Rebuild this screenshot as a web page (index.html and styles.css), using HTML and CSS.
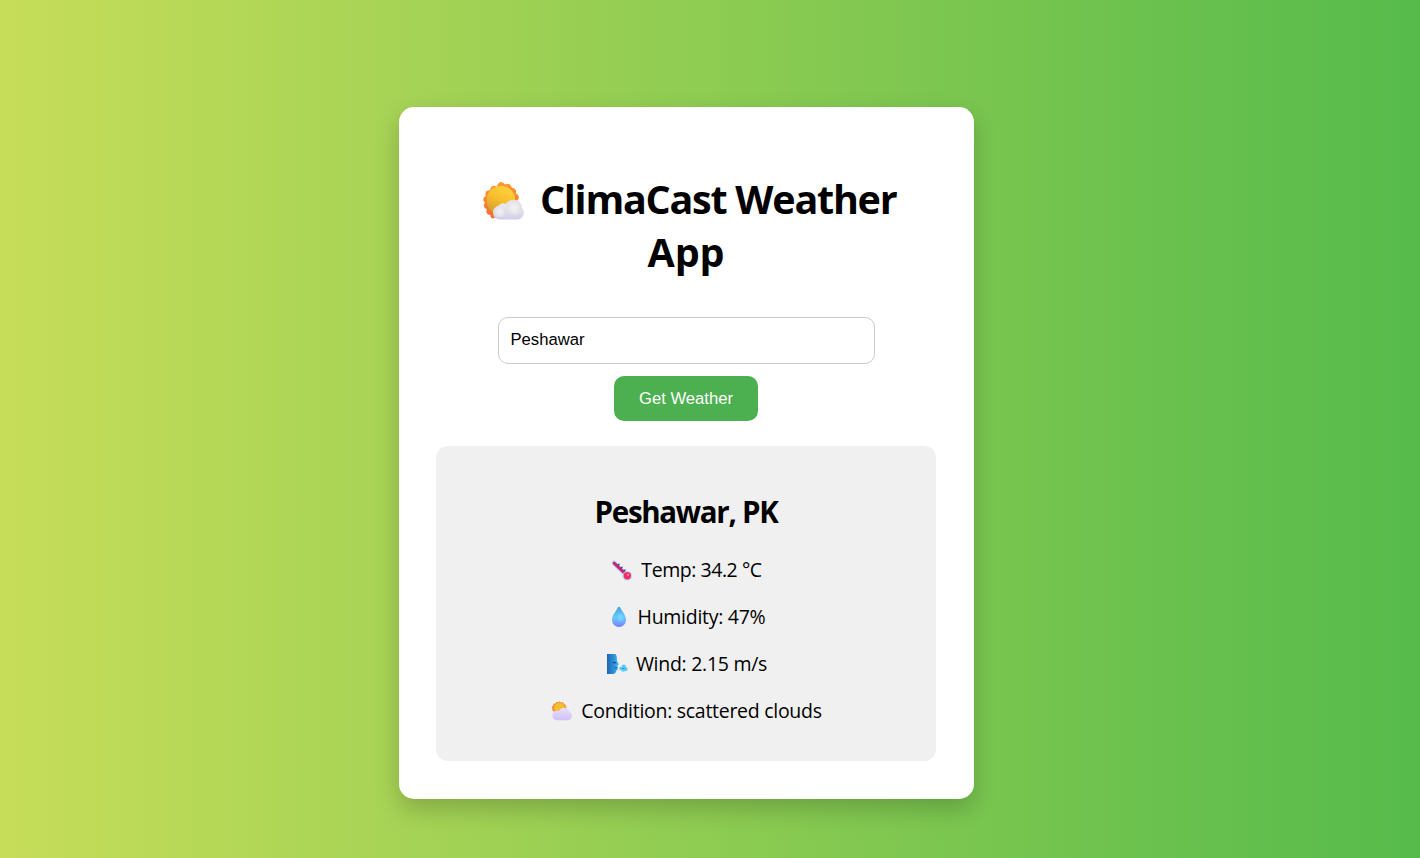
FILE: index.html
```
<!DOCTYPE html>
<html lang="en">
<head>
<meta charset="utf-8">
<title>ClimaCast Weather App</title>
<link rel="stylesheet" href="styles.css">
</head>
<body>
<svg class="defs" width="0" height="0" aria-hidden="true">
  <defs>
    <linearGradient id="sun" x1="0.7" y1="0" x2="0.2" y2="1"><stop offset="0" stop-color="#ffd23c"/><stop offset="0.5" stop-color="#f7bd2d"/><stop offset="1" stop-color="#cf9a2b"/></linearGradient>
    <linearGradient id="rays" x1="0.5" y1="0" x2="0.5" y2="1"><stop offset="0" stop-color="#ff9a2e"/><stop offset="1" stop-color="#f26d35"/></linearGradient>
    <linearGradient id="cloud" x1="0" y1="0" x2="0" y2="1"><stop offset="0" stop-color="#efeff1"/><stop offset="0.55" stop-color="#e3e1e8"/><stop offset="1" stop-color="#d3cbee"/></linearGradient>
    <radialGradient id="puff"><stop offset="0" stop-color="#f3f3f4"/><stop offset="0.6" stop-color="#e9e8ec"/><stop offset="1" stop-color="#e0dee6"/></radialGradient>
    <linearGradient id="lilac" x1="0" y1="0" x2="0" y2="1"><stop offset="0" stop-color="#e6e0f8"/><stop offset="1" stop-color="#cfc1fa"/></linearGradient>
    <linearGradient id="drop" x1="0.5" y1="0" x2="0.5" y2="1"><stop offset="0" stop-color="#4ba3d8"/><stop offset="0.5" stop-color="#66c8fb"/><stop offset="0.75" stop-color="#71a9ff"/><stop offset="1" stop-color="#7a7cf5"/></linearGradient>
    <linearGradient id="face" x1="0" y1="0" x2="1" y2="0"><stop offset="0" stop-color="#1f67ae"/><stop offset="0.5" stop-color="#2b8bd3"/><stop offset="1" stop-color="#43b9f2"/></linearGradient>
  </defs>
</svg>
<main class="card">
  <h1 class="title">
    <svg class="title-icon" viewBox="0 0 41 38" aria-hidden="true">
      <path fill="url(#rays)" d="M18 0q2.500 0 4 2.500 3-1.500 5 .2 1.500 1 1.700 3.100 2.600-.2 3.800 1.700 1 1.600.3 4 2.700 1 3 3.200.3 2-1.500 4 1.700 2.200.7 4.300L34 26 10 36.500q-2.200 0-2.800-3.500-3.200-.4-3.700-2.500-.4-1.700.3-3.300Q.9 26 .8 23.700q-.1-1.600 1.200-3Q0 19 .3 17q.4-2 2.500-3Q2 11 3.300 9.500 4.600 8 7 8.300 7.200 5 9.400 4q1.700-.8 4.300.7Q15.200 0 18 0Z"/>
      <circle cx="18" cy="18.200" r="14.300" fill="url(#sun)"/>
      <path fill="url(#cloud)" d="M17 37.500a7 7 0 0 1-1.200-13.900 6 6 0 0 1 7-1.600A8.900 8.900 0 0 1 39 26q2 1.700 2 4.700a7 7 0 0 1-7 6.800Z"/>
      <circle cx="31" cy="25.500" r="7.800" fill="url(#puff)"/>
      <circle cx="17" cy="29.500" r="5.600" fill="url(#puff)"/>
    </svg>
    <span class="title-text">ClimaCast Weather</span><br>App
  </h1>
  <form class="search">
    <input class="city-input" type="text" value="Peshawar" placeholder="Enter city name" aria-label="City">
    <button class="submit" type="button">Get Weather</button>
  </form>
  <section class="result">
    <h2 class="place">Peshawar, PK</h2>
    <p class="reading temp">
      <svg class="icon" viewBox="0 0 24 24" aria-hidden="true">
        <g fill="none" stroke-linecap="round"><path d="M4 5l12 11.500" stroke="#b9d9f8" stroke-width="5"/><path d="M4.200 5.200l12 11.500" stroke="#c92475" stroke-width="3"/><path d="M9 6.300L8.200 7.200M12 9.200l-.8.900M15 12l-.8.900" stroke="#46477c" stroke-width="1.400"/></g>
        <circle cx="17.300" cy="17.800" r="4.800" fill="#b9d9f8"/><circle cx="17.300" cy="17.800" r="3.700" fill="#ef2e63"/><circle cx="18" cy="16.800" r="1.200" fill="#ff7890"/>
      </svg>
      <span>Temp: 34.2 °C</span>
    </p>
    <p class="reading">
      <svg class="icon" viewBox="0 0 24 24" aria-hidden="true"><path fill="url(#drop)" d="M12 1.800q.9 0 1.500 1.200C15.500 7 19 10.300 19 15a7 7 0 0 1-14 0C5 10.300 8.500 7 10.500 3q.6-1.200 1.500-1.200Z"/><ellipse cx="13.500" cy="12.500" rx="2.800" ry="4" fill="#79dcff" opacity=".55"/></svg>
      <span>Humidity: 47%</span>
    </p>
    <p class="reading">
      <svg class="icon" viewBox="0 0 24 24" aria-hidden="true">
        <path fill="url(#face)" d="M2 2h8.500q1.500 1.500 1.300 4l.2 3 1.800 3.200-1.300 1.300.5 2.500q0 1.700-1.500 2.200-.3 3.300-3.500 3.800H2Z"/>
        <path d="M8 10.200q1.500 1 3 .2" fill="none" stroke="#174a7c" stroke-width="1.200"/><path d="M9 15.800h3" stroke="#1f6ca8"/>
        <g fill="#5fcaf5"><circle cx="16" cy="16.500" r="1.800"/><circle cx="18.800" cy="14.800" r="2.200"/><circle cx="20.400" cy="17" r="2.200"/><circle cx="18.200" cy="17.700" r="2.100"/></g>
        <path d="M17 16.500h2.500" stroke="#278fc8"/>
      </svg>
      <span>Wind: 2.15 m/s</span>
    </p>
    <p class="reading">
      <svg class="icon" viewBox="0 0 24 24" aria-hidden="true">
        <path fill="#f28b38" d="M9.500 2.300l1.600 1.200 2-.3.800 1.800 1.900.7-.1 2 1.300 1.500L14 15 5 14.500l-.8-1.900-1.900-.8.2-2-1-1.800L3.200 6.700l.3-2 2-.3 1-1.600 1.700.5Z"/>
        <circle cx="9.500" cy="9" r="5.400" fill="#f6bd2c"/>
        <path fill="url(#lilac)" d="M7 21.200a4.800 4.800 0 0 1-.7-9.500q1.600-.4 2.700.3a5.600 5.600 0 0 1 10.300.5 4.600 4.600 0 0 1-1.300 8.700Z"/>
      </svg>
      <span>Condition: scattered clouds</span>
    </p>
  </section>
</main>
</body>
</html>
```
FILE: styles.css
```
* {
  box-sizing: border-box;
}

html {
  height: 100%;
  background: linear-gradient(to right, #c6dd59, #56bb4b);
}

body {
  display: flex;
  flex-direction: column;
  margin: 0;
  padding: 107px 446px 59px 399px;
  font-family: "Segoe UI", "Open Sans", "Noto Sans", sans-serif;
  color: #000;
}

.defs {
  position: absolute;
}

.card {
  width: 575px;
  height: 692px;
  padding: 38px 38px 38px 37px;
  border-radius: 15px;
  background: #fff;
  box-shadow: 0 10px 25px rgba(0, 0, 0, 0.2);
  text-align: center;
}

.title {
  margin: 28px 0 27px;
  font-size: 39.5px;
  line-height: 53px;
  white-space: nowrap;
}

.title-icon {
  width: 41px;
  height: 38px;
  margin: 0 6px 0 7px;
  vertical-align: -6px;
}

.title-text {
  letter-spacing: -1.25px;
}

.search {
  display: flex;
  flex-direction: column;
  align-items: center;
  gap: 12px;
  margin: 38px 0 25px;
}

.city-input {
  width: 377px;
  height: 47px;
  padding: 0 12px 2px;
  border: 1px solid #ccc;
  border-radius: 10px;
  background: #fff;
  color: #000;
  font: 16.67px "Liberation Sans", Arial, sans-serif;
}

.submit {
  width: 144px;
  height: 45px;
  padding: 0;
  border: 0;
  border-radius: 10px;
  background: #4caf50;
  color: #fff;
  font: 16.67px "Liberation Sans", Arial, sans-serif;
}

.result {
  height: 315px;
  padding: 46px 0 0;
  border-radius: 12px;
  background: #f0f0f0;
}

.place {
  margin: 0 0 24px;
  font-size: 29.5px;
  line-height: 40px;
  letter-spacing: -1.3px;
}

.reading {
  display: flex;
  align-items: center;
  justify-content: center;
  gap: 7px;
  margin: 0 0 20px;
  font-size: 19.5px;
  line-height: 27px;
  letter-spacing: -0.28px;
}

.temp {
  letter-spacing: -0.45px;
}

.icon {
  width: 24px;
  height: 24px;
}
```
